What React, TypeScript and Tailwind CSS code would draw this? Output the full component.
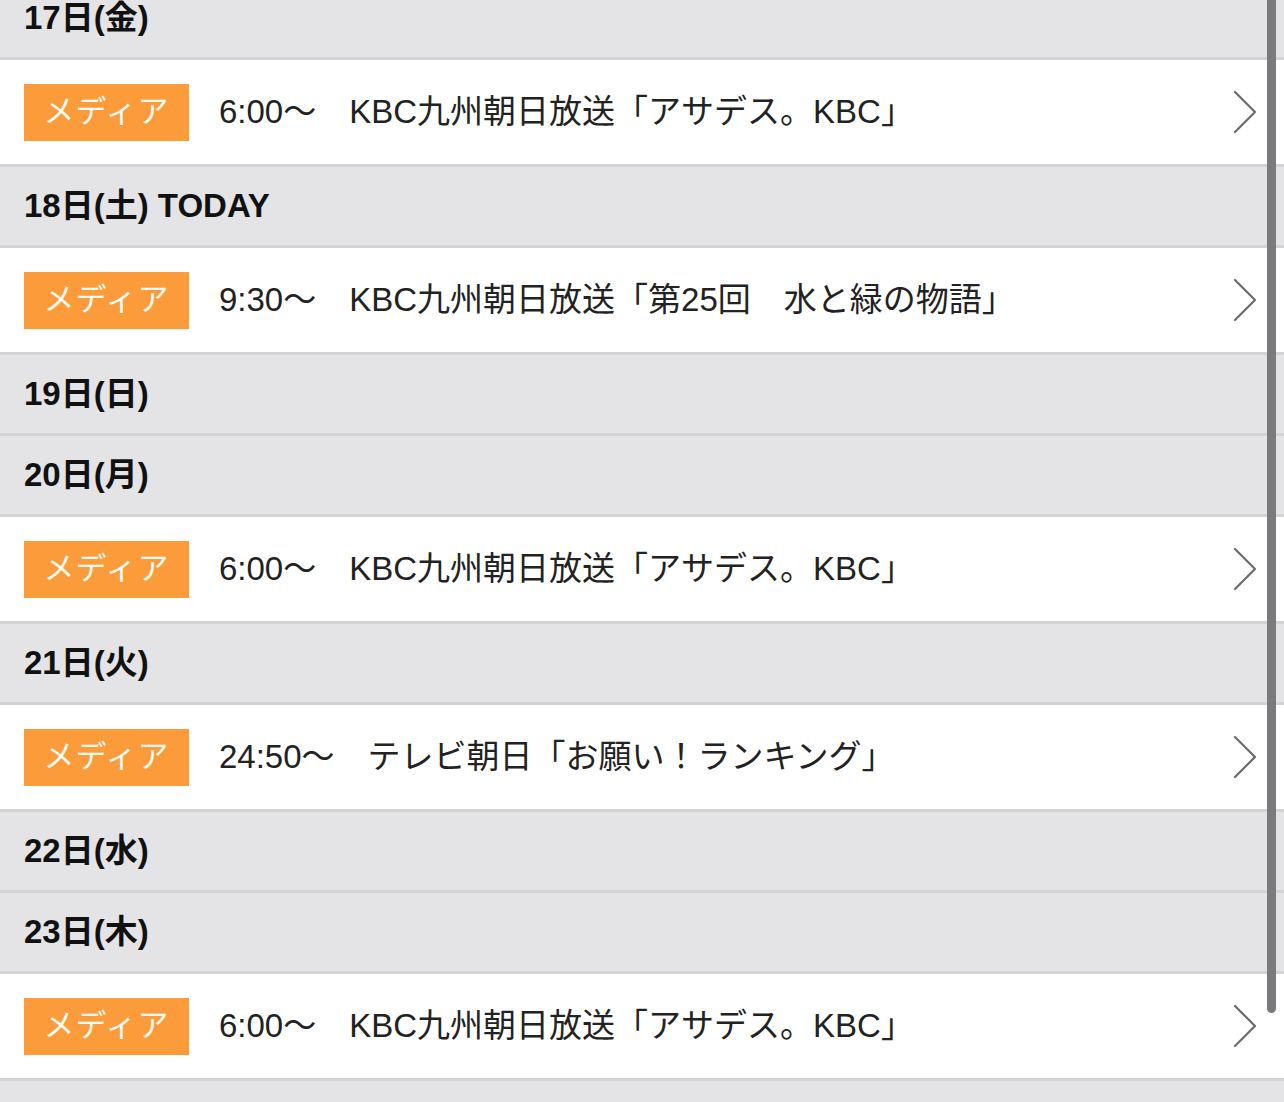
const items: { date: string; events: { time: string; title: string }[] }[] = [
  { date: '17日(金)', events: [{ time: '6:00〜', title: 'KBC九州朝日放送「アサデス。KBC」' }] },
  { date: '18日(土) TODAY', events: [{ time: '9:30〜', title: 'KBC九州朝日放送「第25回　水と緑の物語」' }] },
  { date: '19日(日)', events: [] },
  { date: '20日(月)', events: [{ time: '6:00〜', title: 'KBC九州朝日放送「アサデス。KBC」' }] },
  { date: '21日(火)', events: [{ time: '24:50〜', title: 'テレビ朝日「お願い！ランキング」' }] },
  { date: '22日(水)', events: [] },
  { date: '23日(木)', events: [{ time: '6:00〜', title: 'KBC九州朝日放送「アサデス。KBC」' }] },
];

const Chevron = () => (
  <svg width="26" height="44" viewBox="0 0 26 44" fill="none" className="shrink-0">
    <path d="M3 2 L23 22 L3 42" stroke="#6b6b6b" strokeWidth="2.2" strokeLinecap="round" strokeLinejoin="round" />
  </svg>
);

const EventRow = ({ time, title }: { time: string; title: string }) => (
  <div className="flex h-[107px] items-center border-b-[3px] border-[#d3d3d6] bg-white pl-6 pr-[26px]">
    <div className="flex h-[57px] w-[165px] shrink-0 items-center justify-center bg-[#fb9b3a] text-[31px] tracking-[1px] text-[#fffaf2]">
      メディア
    </div>
    <div className="ml-[30px] flex-1 whitespace-nowrap text-[33px] text-[#222]">
      {time}　{title}
    </div>
    <Chevron />
  </div>
);

export default function App() {
  return (
    <div
      className="relative h-[1102px] w-[1284px] overflow-hidden bg-[#e4e4e7]"
      style={{ fontFamily: '"Liberation Sans", "Noto Sans CJK JP", sans-serif' }}
    >
      <div className="-mt-[21px]">
        {items.map((d) => (
          <div key={d.date}>
            <div className="flex h-[81px] items-center border-b-[3px] border-[#d3d3d6] bg-[#e4e4e7] pl-6 text-[33px] font-bold text-[#111]">
              {d.date}
            </div>
            {d.events.map((e, i) => (
              <EventRow key={i} time={e.time} title={e.title} />
            ))}
          </div>
        ))}
      </div>
      {/* scroll indicator */}
      <div className="absolute right-[8px] top-0 h-[1013px] w-[9px] rounded-b-full bg-[#7a7a7c]" />
    </div>
  );
}
